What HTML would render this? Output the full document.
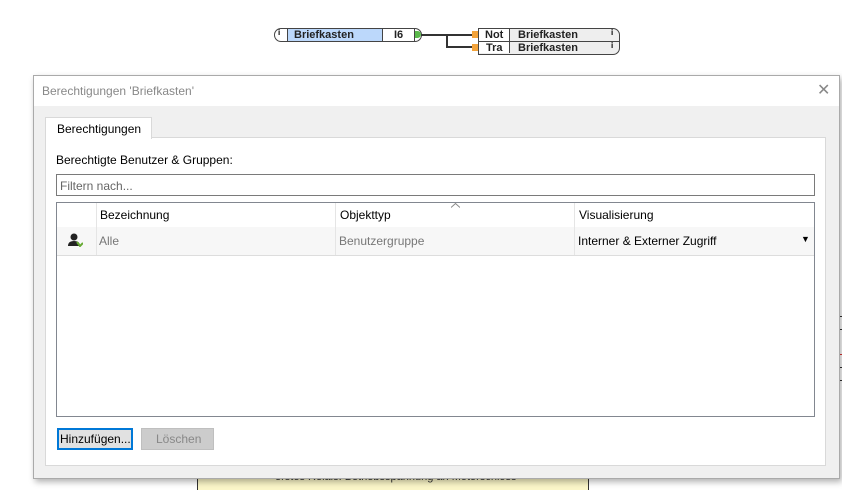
<!DOCTYPE html><html><head><style>
body{margin:0;width:842px;height:490px;overflow:hidden;background:#fff;font-family:"Liberation Sans",sans-serif;font-size:12px;position:relative}
.a{position:absolute}
.t{font-size:11px;font-weight:bold;color:#222}
</style></head><body>
<!-- diagram -->
<div class="a" style="left:274px;top:28px;width:146px;height:12px;border:1px solid #444;border-radius:7px;background:#fff"></div>
<div class="a" style="left:287px;top:29px;width:95px;height:12px;background:#bcd8fb;border-left:1px solid #444"></div>
<div class="a t" style="left:294px;top:29px">Briefkasten</div>
<div class="a" style="left:382px;top:29px;width:1px;height:12px;background:#444"></div>
<div class="a t" style="left:394px;top:29px">I6</div>
<div class="a" style="left:414px;top:29px;width:1px;height:12px;background:#444"></div>
<div class="a" style="left:278px;top:28px;font-size:8px;font-weight:bold">i</div>
<div class="a" style="left:415px;top:31px;width:6px;height:7px;background:#5ab84a;border-radius:0 4px 4px 0"></div>
<div class="a" style="left:421px;top:34px;width:56px;height:2px;background:#333"></div>
<div class="a" style="left:446px;top:34px;width:2px;height:14px;background:#333"></div>
<div class="a" style="left:446px;top:46px;width:31px;height:2px;background:#333"></div>
<div class="a" style="left:472px;top:31px;width:6px;height:7px;background:#f3a33a"></div>
<div class="a" style="left:472px;top:44px;width:6px;height:7px;background:#f3a33a"></div>
<div class="a" style="left:478px;top:28px;width:140px;height:25px;border:1px solid #444;border-radius:0 7px 7px 0;background:#eee"></div>
<div class="a" style="left:479px;top:29px;width:30px;height:24px;background:#fff;border-right:1px solid #444"></div>
<div class="a" style="left:478px;top:41px;width:141px;height:1px;background:#444"></div>
<div class="a t" style="left:485px;top:29px">Not</div><div class="a t" style="left:518px;top:29px">Briefkasten</div>
<div class="a t" style="left:486px;top:42px">Tra</div><div class="a t" style="left:518px;top:42px">Briefkasten</div>
<div class="a" style="left:611px;top:28px;font-size:8px;font-weight:bold">i</div><div class="a" style="left:611px;top:41px;font-size:8px;font-weight:bold">i</div>
<!-- bg -->
<div class="a" style="left:197px;top:470px;width:390px;height:20px;background:#fbf6c8;border-left:1px solid #333;border-right:1px solid #333"></div>
<div class="a" style="left:275px;top:471px;font-size:11px;color:#333">erstes Relais: Betriebsspannung an Motorschloss</div>
<div class="a" style="left:838px;top:316px;width:4px;height:1px;background:#333"></div>
<div class="a" style="left:838px;top:329px;width:4px;height:1px;background:#333"></div>
<div class="a" style="left:838px;top:354px;width:4px;height:1px;background:#d33"></div>
<div class="a" style="left:838px;top:367px;width:4px;height:1px;background:#333"></div>
<div class="a" style="left:838px;top:380px;width:4px;height:1px;background:#333"></div>
<!-- dialog -->
<div class="a" style="left:33px;top:75px;width:805px;height:402px;background:#f0f0f0;border:1px solid #aaa;box-shadow:2px 3px 6px rgba(0,0,0,.3)"></div>
<div class="a" style="left:34px;top:76px;width:805px;height:30px;background:#fff"></div>
<div class="a" style="left:42px;top:84px;color:#888;font-size:12px">Berechtigungen 'Briefkasten'</div>
<div class="a" style="left:817px;top:80px;color:#888;font-size:16px">✕</div>
<div class="a" style="left:45px;top:137px;width:779px;height:327px;background:#fff;border:1px solid #d9d9d9"></div>
<div class="a" style="left:45px;top:117px;width:105px;height:21px;background:#fff;border:1px solid #d9d9d9;border-bottom:none"></div>
<div class="a" style="left:57px;top:122px">Berechtigungen</div>
<div class="a" style="left:56px;top:153px">Berechtigte Benutzer &amp; Gruppen:</div>
<div class="a" style="left:56px;top:174px;width:757px;height:20px;border:1px solid #7a7a7a;background:#fff"></div>
<div class="a" style="left:60px;top:179px;color:#666">Filtern nach...</div>
<div class="a" style="left:56px;top:202px;width:757px;height:213px;border:1px solid #828790;background:#fff"></div>
<div class="a" style="left:57px;top:227px;width:757px;height:28px;background:#f7f7f7;border-bottom:1px solid #ddd"></div>
<div class="a" style="left:96px;top:203px;width:1px;height:52px;background:#e5e5e5"></div>
<div class="a" style="left:335px;top:203px;width:1px;height:52px;background:#e5e5e5"></div>
<div class="a" style="left:574px;top:203px;width:1px;height:52px;background:#e5e5e5"></div>
<div class="a" style="left:100px;top:208px">Bezeichnung</div>
<div class="a" style="left:340px;top:208px">Objekttyp</div>
<svg class="a" style="left:451px;top:203px" width="9" height="5"><path d="M0 4.5 L4.5 0.5 L9 4.5" stroke="#888" fill="none"/></svg>
<div class="a" style="left:579px;top:208px">Visualisierung</div>
<div class="a" style="left:99px;top:234px;color:#777">Alle</div>
<div class="a" style="left:339px;top:234px;color:#777">Benutzergruppe</div>
<div class="a" style="left:578px;top:234px">Interner &amp; Externer Zugriff</div>
<div class="a" style="left:801px;top:234px;font-size:9px">▼</div>
<svg class="a" style="left:67px;top:233px" width="16" height="14"><circle cx="7" cy="4" r="3.5" fill="#222"/><path d="M1 13 Q1 8 7 8 Q13 8 13 13Z" fill="#222"/><path d="M10 9 L13 13 L16 10" stroke="#6a3" stroke-width="2" fill="none"/></svg>
<div class="a" style="left:57px;top:428px;width:72px;height:18px;border:2px solid #0078d7;background:#e1e1e1"></div>
<div class="a" style="left:60px;top:432px">Hinzufügen...</div>
<div class="a" style="left:141px;top:428px;width:71px;height:20px;border:1px solid #bfbfbf;background:#ccc"></div>
<div class="a" style="left:156px;top:432px;color:#888">Löschen</div>
</body></html>
